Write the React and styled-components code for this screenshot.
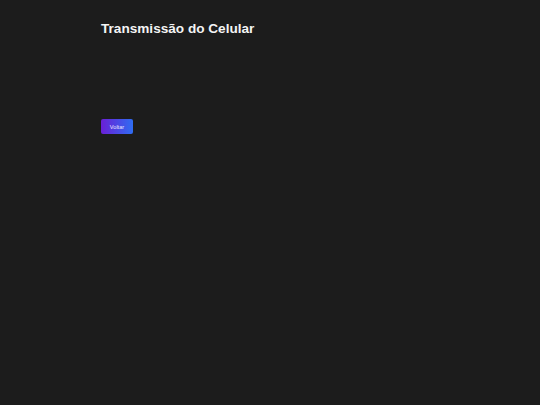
import React from "react";
import styled, { createGlobalStyle } from "styled-components";

const Global = createGlobalStyle`
  html, body { margin: 0; padding: 0; background: #1c1c1c; }
  body { font-family: "Liberation Sans", Arial, sans-serif; color: #f2f2f2; }
  #root { min-height: 405px; }
`;

const Page = styled.div`
  min-height: 405px;
  background: #1c1c1c;
  padding: 20px 0 0 101px;
  box-sizing: border-box;
`;

const Title = styled.h1`
  margin: 0;
  font-size: 13.6px;
  font-weight: 700;
  line-height: 18px;
  color: #f4f4f4;
`;

const Stage = styled.div`
  height: 81px;
`;

const BackButton = styled.button`
  display: block;
  width: 32px;
  height: 15px;
  padding: 0;
  border: none;
  border-radius: 2px;
  background: linear-gradient(90deg, #6a1fd6 0%, #2f6df2 100%);
  color: #e8e8ff;
  font-family: "Liberation Sans", Arial, sans-serif;
  font-size: 5.6px;
  cursor: pointer;
`;

export default function App() {
  return (
    <>
      <Global />
      <Page>
        <Title>Transmissão do Celular</Title>
        <Stage />
        <BackButton>Voltar</BackButton>
      </Page>
    </>
  );
}
